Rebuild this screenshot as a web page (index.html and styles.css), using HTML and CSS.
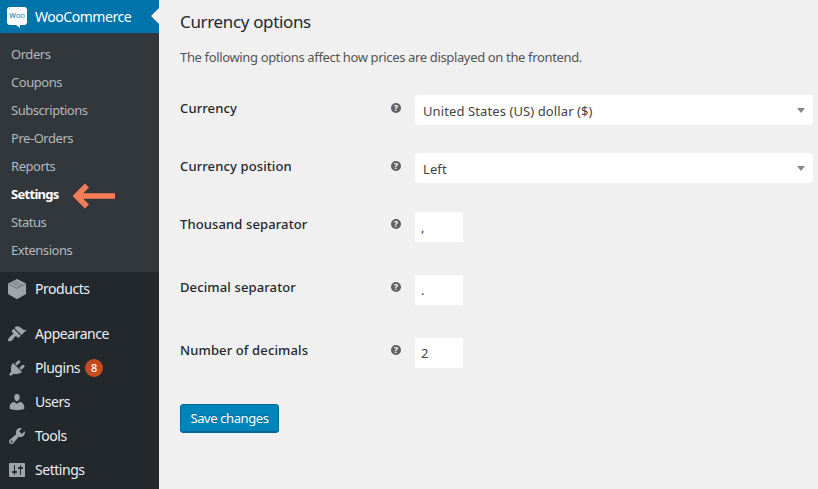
FILE: index.html
```html
<!DOCTYPE html>
<html lang="en">
<head>
<meta charset="utf-8">
<title>Currency options</title>
<link rel="stylesheet" href="styles.css">
</head>
<body>
<div class="app">
<nav class="sidebar">
  <a class="item current"><span class="woo">W<small>OO</small></span><span class="woo-label">WooCommerce</span></a>
  <ul class="submenu">
    <li>Orders</li>
    <li>Coupons</li>
    <li>Subscriptions</li>
    <li>Pre-Orders</li>
    <li>Reports</li>
    <li class="active"><span>Settings</span><svg class="arrow" width="42" height="26" viewBox="0 0 42 26"><path d="M14 2.500 3.500 13 14 23.500M4 13H42" fill="none" stroke="#f47c57" stroke-width="5.600"/></svg></li>
    <li>Status</li>
    <li>Extensions</li>
  </ul>
  <a class="item products"><svg class="icon" viewBox="0 0 20 20"><path d="M10 0 19 4.500V15L10 20.300 1 15V4.500z"/><path class="line" d="M1.500 5 10 9.300 18.500 5M4.800 3.300l8.400 4.300M7.300 2l8.400 4.300"/></svg><span>Products</span></a>
  <a class="item appearance"><svg class="icon" viewBox="0 0 20 20"><path d="M14.480 11.060L7.410 3.990l1.500-1.500c.5-.56 2.300-.47 3.510.32 1.210.8 1.430 1.280 2.910 2.100 1.180.64 2.450 1.260 4.450.85zm-.71.71L6.700 4.700 4.930 6.470c-.39.39-.39 1.020 0 1.410l1.060 1.060c.39.39.39 1.030 0 1.420-.6.6-1.430 1.110-2.210 1.690-.35.26-.7.53-1.010.84C1.430 14.230.4 16.080 1.400 17.070c.99 1 2.840-.03 4.180-1.360.31-.31.58-.66.85-1.020.57-.78 1.080-1.610 1.690-2.210.39-.39 1.020-.39 1.410 0l1.060 1.060c.39.39 1.020.39 1.410 0z"/></svg><span>Appearance</span></a>
  <a class="item plugins"><svg class="icon" viewBox="0 0 20 20"><path d="M13.110 4.360L9.870 7.600 8 5.730l3.240-3.240c.35-.34 1.050-.2 1.560.32.52.51.66 1.210.31 1.550zm-8 1.770l.91-1.120 9.010 9.010-1.190.84c-.71.71-2.630 1.160-3.820 1.160H6.140L4.900 17.260c-.59.59-1.540.59-2.120 0-.59-.58-.59-1.530 0-2.120l1.240-1.240v-3.880c0-1.130.4-3.190 1.090-3.890zm7.260 3.970l3.240-3.240c.34-.35 1.040-.21 1.550.31.52.51.66 1.210.31 1.550l-3.240 3.250z"/></svg><span>Plugins</span><b class="count">8</b></a>
  <a class="item users"><svg class="icon" viewBox="0 0 20 20"><path d="M10 9.250c-2.270 0-2.730-3.440-2.730-3.440C7 4.020 7.820 2 9.970 2c2.160 0 2.980 2.020 2.710 3.810 0 0-.41 3.440-2.680 3.440zm0 2.570L12.720 10c2.390 0 4.520 2.330 4.520 4.530v2.490s-3.650 1.130-7.240 1.130c-3.650 0-7.240-1.130-7.240-1.130v-2.490c0-2.250 1.940-4.480 4.470-4.480z"/></svg><span>Users</span></a>
  <a class="item tools"><svg class="icon" viewBox="0 0 20 20"><path d="M16.680 9.770c-1.340 1.340-3.300 1.670-4.950.99l-5.410 6.520c-.99.99-2.590.99-3.580 0s-.99-2.590 0-3.570l6.520-5.420c-.68-1.650-.35-3.610.99-4.950 1.280-1.280 3.120-1.620 4.720-1.060l-2.890 2.890 2.820 2.820 2.860-2.870c.53 1.580.18 3.390-1.080 4.650zM3.810 16.210c.4.39 1.040.39 1.430 0 .4-.4.4-1.040 0-1.430-.39-.4-1.030-.4-1.430 0-.39.39-.39 1.030 0 1.430z"/></svg><span>Tools</span></a>
  <a class="item settings"><svg class="icon" viewBox="0 0 20 20"><path d="M18 16V4c0-.55-.45-1-1-1H3c-.55 0-1 .45-1 1v12c0 .55.45 1 1 1h14c.55 0 1-.45 1-1zM8 11h1c.55 0 1 .45 1 1s-.45 1-1 1H8v1.500c0 .28-.22.5-.5.5s-.5-.22-.5-.5V13H6c-.55 0-1-.45-1-1s.45-1 1-1h1V5.500c0-.28.22-.5.5-.5s.5.22.5.5V11zm5-2h-1c-.55 0-1-.45-1-1s.45-1 1-1h1V5.500c0-.28.22-.5.5-.5s.5.22.5.5V7h1c.55 0 1 .45 1 1s-.45 1-1 1h-1v5.500c0 .28-.22.5-.5.5s-.5-.22-.5-.5V9z"/></svg><span>Settings</span></a>
</nav>
<main class="content">
  <h2>Currency options</h2>
  <p>The following options affect how prices are displayed on the frontend.</p>
  <form>
    <div class="row"><label>Currency</label><i class="help">?</i><div class="select">United States (US) dollar ($)</div></div>
    <div class="row"><label>Currency position</label><i class="help">?</i><div class="select">Left</div></div>
    <div class="row tall"><label>Thousand separator</label><i class="help">?</i><div class="input">,</div></div>
    <div class="row tall"><label>Decimal separator</label><i class="help">?</i><div class="input">.</div></div>
    <div class="row last"><label>Number of decimals</label><i class="help">?</i><div class="input">2</div></div>
    <button type="button">Save changes</button>
  </form>
</main>
</div>
</body>
</html>
```
FILE: styles.css
```css
* { box-sizing: border-box; }
body {
  margin: 0;
  font: 13px/18px "Noto Sans", sans-serif;
  background: #f0f0f0;
  color: #444;
  overflow: hidden;
}
.app { display: flex; height: 489px; }
.sidebar { width: 159px; flex: none; background: #23282d; overflow: hidden; }
.item {
  display: flex;
  align-items: center;
  height: 34px;
  padding-left: 7px;
  color: #eee;
  font-size: 14px;
  letter-spacing: -.46px;
}
.icon { width: 20px; height: 20px; margin-right: 8px; flex: none; fill: #a0a5aa; overflow: visible; }
.line { fill: none; stroke: #646a6f; stroke-width: .8; }
.current { height: 33px; background: #0073aa; color: #fff; position: relative; }
.current::after {
  content: "";
  position: absolute;
  right: 0;
  top: 8px;
  border: 8px solid transparent;
  border-left: 0;
  border-right-color: #f0f0f0;
}
.woo {
  position: relative;
  width: 20px;
  height: 18px;
  margin: 0 8px 2px 0;
  border-radius: 3px;
  background: #fff;
  color: #2f8bb8;
  font: 600 7px/17px "Open Sans", sans-serif;
  letter-spacing: -.2px;
  text-align: center;
}
.woo small { font-size: 6px; }
.woo::after {
  content: "";
  position: absolute;
  left: 9px;
  top: 18px;
  border-top: 3px solid #fff;
  border-left: 4px solid transparent;
}
.submenu {
  list-style: none;
  margin: 0;
  padding: 7px 0 8px 11px;
  height: 239px;
  background: #32373c;
  color: #b4b9be;
  letter-spacing: -.46px;
}
.submenu li { display: flex; align-items: center; height: 28px; }
.submenu .active { color: #fff; font-weight: 700; letter-spacing: -.7px; }
.arrow { margin: 3px 0 0 14px; }
.appearance { margin-top: 11px; }
.count {
  width: 18px;
  height: 18px;
  margin-left: 5px;
  border-radius: 50%;
  background: #ca4a1f;
  color: #fff;
  font: 500 11px/18px "Noto Sans", sans-serif;
  letter-spacing: 0;
  text-align: center;
}
.content { flex: 1; padding: 10px 5px 0 21px; }
h2 { margin: 0; font-size: 17px; line-height: 24px; font-weight: 400; letter-spacing: -.35px; color: #23282d; }
p { margin: 14px 0 29px; color: #555; letter-spacing: -.35px; }
.row { display: grid; grid-template-columns: 211px 24px 1fr; height: 58px; }
.tall { height: 63px; }
.last { height: 66px; }
label { line-height: 26px; font-weight: 500; letter-spacing: .12px; color: #23282d; }
.help {
  width: 10px;
  height: 10px;
  margin-top: 8px;
  border-radius: 50%;
  background: #606060;
  color: #fff;
  font: bold 9px/10px "Noto Sans", sans-serif;
  text-align: center;
}
.select, .input { height: 30px; background: #fff; }
.select {
  display: flex;
  align-items: center;
  justify-content: space-between;
  padding: 2px 8px 0;
  border-radius: 4px;
  letter-spacing: .1px;
}
.select::after { content: ""; border: 4px solid transparent; border-top: 5px solid #888; border-bottom: 0; margin-bottom: 1px; }
.input { width: 48px; margin-top: 1px; padding: 0 6px; line-height: 30px; }
button {
  display: block;
  width: 99px;
  height: 29px;
  margin-top: 1px;
  padding: 0;
  border: 1px solid #006799;
  border-radius: 3px;
  background: #0085ba;
  box-shadow: inset 0 -1px #006799;
  color: #fff;
  font: 13px/25px "Noto Sans", sans-serif;
  letter-spacing: -.4px;
  text-shadow: 0 -1px 1px #006799;
}
```
